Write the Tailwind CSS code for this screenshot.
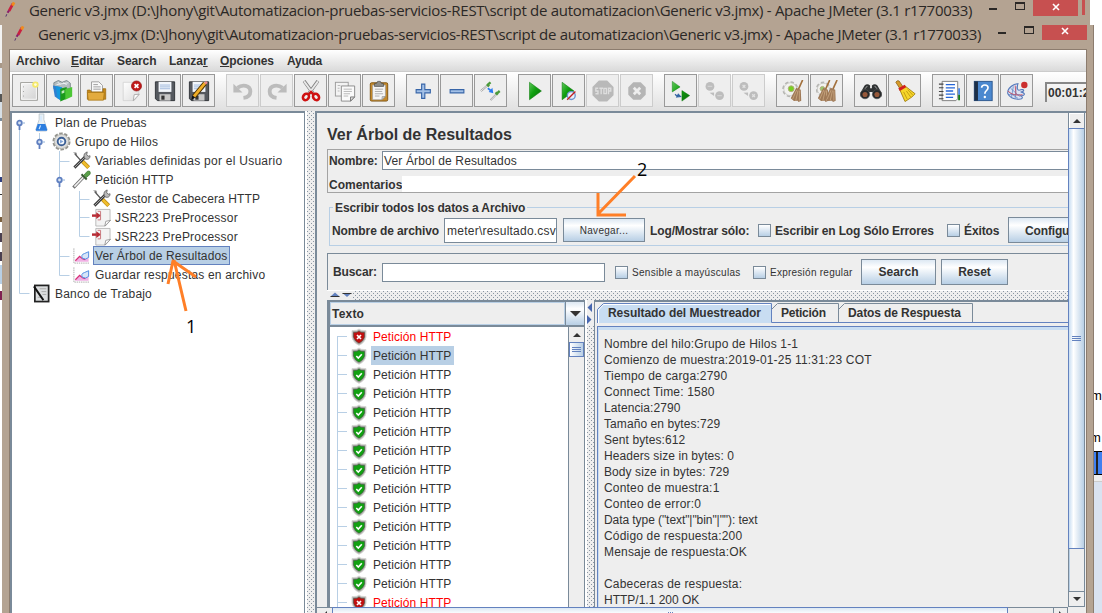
<!DOCTYPE html>
<html lang="es">
<head>
<meta charset="utf-8">
<title>Apache JMeter</title>
<script src="https://cdn.jsdelivr.net/npm/@tailwindcss/browser@4"></script>
</head>
<body class="relative h-[613px] w-[1102px] overflow-hidden bg-white font-['Liberation_Sans',Arial,sans-serif] text-[12px] leading-none text-[#333] whitespace-nowrap">
<svg class="absolute h-0 w-0">
  <defs>
    <linearGradient id="green" x1="0" y1="0" x2="1" y2="1"><stop offset="0" stop-color="#5fc85a"/><stop offset=".45" stop-color="#10a010"/><stop offset="1" stop-color="#0a6a0a"/></linearGradient>
    <linearGradient id="paper" x1="0" y1="0" x2="1" y2="1"><stop offset="0" stop-color="#fff"/><stop offset="1" stop-color="#dcdcdc"/></linearGradient>
    <linearGradient id="greypaper" x1="0" y1="0" x2="1" y2="1"><stop offset="0" stop-color="#f4f4f4"/><stop offset="1" stop-color="#d2d2d2"/></linearGradient>
  </defs>
  <symbol id="feather" viewBox="0 0 12 18"><path d="M9 3 5 10.500" stroke="#c9203f" stroke-width="3" fill="none"/><path d="M10.300 1.500 8.600 5" stroke="#f08a1d" stroke-width="3"/><path d="M5 10 3.400 12.500" stroke="#8a1c6a" stroke-width="2.200"/><path d="M2.600 14 1.600 16.500" stroke="#4b2a6a" stroke-width="1"/></symbol>
  <symbol id="new" viewBox="0 0 24 24"><rect x="3" y="3" width="18" height="19" fill="url(#greypaper)" stroke="#8b8b86"/><rect x="4" y="4" width="16" height="17" fill="none" stroke="#fff"/><path d="M6 7v14" stroke="#999" stroke-dasharray="1 4"/><circle cx="19" cy="5" r="3.500" fill="#f5e96a"/><circle cx="19" cy="5" r="1.500" fill="#fffde0"/></symbol>
  <symbol id="templates" viewBox="0 0 24 24"><path d="M2 3l5-2.500 4 2 5-2 4 3v6H2z" fill="#b3bcc0" stroke="#68777c" stroke-width=".8"/><path d="M6 2l3 3M12 3l4 2M5 5l13-2" stroke="#eef2f4"/><path d="M1 6l8 1.500v14.500l-6-4z" fill="#2f7fd0"/><path d="M4 6.500l7 1.500v14l-5-2z" fill="#1597dd"/><path d="M9 9.500l7-2v13l-7 3z" fill="#1b9a1b"/><path d="M14.500 10l7.500-2.500v10.500l-7.500 3.500z" fill="#4cc735"/><path d="M10.500 12l3-1v3l-3 1z" fill="#bfe8b8"/></symbol>
  <symbol id="open" viewBox="0 0 24 24"><path d="M6 2h8l4 4v10H6z" fill="#f8f8f8" stroke="#888" stroke-width=".8"/><path d="M8 5h5M8 7.500h8M8 10h8" stroke="#999"/><path d="M1.500 11h3l1.500 2h12.500V9.500h3V21h-20z" fill="#c88a1a" stroke="#9a6a10" stroke-width=".8"/><path d="M1.500 13.500h18.500l-1 8.500H2.500z" fill="#e3ab3e" stroke="#a57414" stroke-width=".8"/></symbol>
  <symbol id="close" viewBox="0 0 24 24"><path d="M3.500 2.500h17v14l-5 6h-12z" fill="url(#paper)" stroke="#cfcfcf" stroke-width=".8"/><path d="M14.500 22.500l1-6.500 5.500-.5z" fill="#fff" stroke="#999" stroke-width=".8"/><circle cx="18" cy="6.500" r="5.500" fill="#c01818" stroke="#8f1010" stroke-width=".7"/><path d="M15.900 4.400l4.200 4.200M20.100 4.400l-4.200 4.200" stroke="#fff" stroke-width="1.900"/></symbol>
  <symbol id="save" viewBox="0 0 24 24"><path d="M1.500 2h21v20.500H4l-2.500-2z" fill="#55595f" stroke="#2e3136"/><rect x="5" y="2" width="14" height="11" fill="#f2f6fb"/><path d="M6.500 5.500h11M6.500 7.500h11M6.500 9.500h11" stroke="#9fb8dc"/><path d="M6 15.500h12v7H6z" fill="#c8c8c8"/><path d="M8 17h3.500v4.500H8z" fill="#333"/></symbol>
  <symbol id="saveas" viewBox="0 0 24 24"><use href="#save" width="24" height="24"/><path d="M18.500 3.500 6.500 18" stroke="#4a3000" stroke-width="5"/><path d="M18.500 3.500 6.500 18" stroke="#f0ae28" stroke-width="3"/><path d="M19.600 1.200l2 1.800-2 2-2-1.800z" fill="#e88"/><path d="M3.500 22l1.200-5 3.200 2.200z" fill="#111"/></symbol>
  <symbol id="undo" viewBox="0 0 24 24"><path d="M6 8.500c5-4 14-3 14 4 0 4-3 6.500-7.500 7" fill="none" stroke="#bcbcbc" stroke-width="4.200"/><path d="M1.500 4v9.500h10z" fill="#bcbcbc"/></symbol>
  <symbol id="redo" viewBox="0 0 24 24"><g transform="matrix(-1 0 0 1 24 0)"><use href="#undo" width="24" height="24"/></g></symbol>
  <symbol id="cut" viewBox="0 0 24 24"><path d="M4.500 1 14.500 15M19.500 1 9.500 15" stroke="#808080" stroke-width="3.600"/><path d="M4.500 1.500 14.500 15M19.500 1.500 9.500 15" stroke="#e9e9e9" stroke-width="2"/><ellipse cx="6.500" cy="18.500" rx="3" ry="3.700" transform="rotate(40 6.500 18.500)" fill="none" stroke="#cf1212" stroke-width="2.800"/><ellipse cx="17.500" cy="18.500" rx="3" ry="3.700" transform="rotate(-40 17.500 18.500)" fill="none" stroke="#cf1212" stroke-width="2.800"/><path d="M9 16l3-3 3 3" stroke="#cf1212" stroke-width="2.600" fill="none"/></symbol>
  <symbol id="copy" viewBox="0 0 24 24"><rect x="1.500" y="2.500" width="14" height="15" fill="#f3f3f3" stroke="#999"/><path d="M8 6.500h14.500v12l-4 4.500H8z" fill="#fafafa" stroke="#888"/><path d="M10.500 10h9M10.500 12.500h9M10.500 15h7M10.500 17.500h5M4 6h3M4 9h2M4 12h2" stroke="#b5b5b5"/><path d="M18 23v-4.500h4.500z" fill="#ddd" stroke="#777"/></symbol>
  <symbol id="paste" viewBox="0 0 24 24"><rect x="2.500" y="3" width="19" height="20" rx="1.500" fill="#c58a2c" stroke="#7b5110"/><path d="M5 5.500h14v12l-4 4H5z" fill="#f6f6f6" stroke="#999" stroke-width=".7"/><path d="M15 21.500l.5-3.500h3.500z" fill="#ccc" stroke="#888" stroke-width=".6"/><path d="M7.500 10h9M7.500 12.500h8M7.500 15h9M7.500 17.500h5" stroke="#aaa"/><path d="M7 7V4l2.500-.5 1-2h3l1 2L17 4v3z" fill="#8c8c88" stroke="#444" stroke-width=".7"/></symbol>
  <symbol id="plus" viewBox="0 0 24 24"><path d="M10.500 4.500h3.500v6h6v3.500h-6v6h-3.500v-6h-6v-3.500h6z" fill="#a3c0e6" stroke="#3765a8" stroke-width="1.200"/></symbol>
  <symbol id="minus" viewBox="0 0 24 24"><path d="M4.500 10.500h15v3.500h-15z" fill="#a3c0e6" stroke="#3765a8" stroke-width="1.200"/></symbol>
  <symbol id="toggle" viewBox="0 0 24 24"><path d="M1 12 8 6" stroke="#999" stroke-width="2"/><path d="M1 12 8 6" stroke="#f2f2f2"/><path d="M7.500 4.500l2.500 2.500M8.500 5l3-2.500" stroke="#4b9a3a" stroke-width="2.600"/><path d="M11.500 22 18 15.500" stroke="#999" stroke-width="2"/><path d="M11.500 22 18 15.500" stroke="#f2f2f2"/><path d="M17 13.500l2.500 2.500M18.500 14.500l3-2.500" stroke="#4b9a3a" stroke-width="2.600"/><path d="M8.500 9l4 3" stroke="#2a7cf0" stroke-width="1.800"/><path d="M14.500 14.500 9.500 13l4-4.500z" fill="#2a7cf0"/></symbol>
  <symbol id="run" viewBox="0 0 24 24"><path d="M6 2.500 19 12 6 21.500z" fill="url(#green)" stroke="#0a7a0a" stroke-width=".6"/></symbol>
  <symbol id="runskip" viewBox="0 0 24 24"><path d="M4.500 2.500 17.500 12 4.500 21.500z" fill="url(#green)" stroke="#0a7a0a" stroke-width=".6"/><circle cx="14.500" cy="17" r="4.300" fill="#e9eef8" stroke="#6a93cf" stroke-width="1.500"/><path d="M19 12.500 10 21.500" stroke="#c02020" stroke-width="1.500"/></symbol>
  <symbol id="stop" viewBox="0 0 24 24"><path d="M7.500 .500h9L23.500 7.500v9L16.500 23.500h-9L.500 16.500v-9z" fill="#b9b9b9"/><g fill="none" stroke="#dedede" stroke-width="1.500"><path d="M6.800 9H4.200v3h2.300v3H3.800M8 9h4M10 9v6.500M13 9.200h2.700v5.600H13zM18 15.500V9h2.500v3H18"/></g></symbol>
  <symbol id="shutdown" viewBox="0 0 24 24"><path d="M8 2.500h8L21.500 8v8L16 21.500H8L2.500 16V8z" fill="#b5b5b5"/><path d="M8.500 8.500l7 7M15.500 8.500l-7 7" stroke="#eee" stroke-width="3"/></symbol>
  <symbol id="rstart" viewBox="0 0 24 24"><path d="M2.500 1.500 11 7.500 2.500 13zM13 11.500 21.500 17 13 23z" fill="url(#green)" stroke="#0a7a0a" stroke-width=".5"/><path d="M5.500 15.500l2 2M7.500 18.500l4-.5-2.500-2.500z" stroke="#3465a4" fill="#3465a4" stroke-width="1.300"/></symbol>
  <symbol id="rstop" viewBox="0 0 24 24"><circle cx="6.500" cy="7" r="4.800" fill="#bdbdbd"/><circle cx="17" cy="17" r="4.800" fill="#bdbdbd"/><path d="M4 7h5M14.500 17h5" stroke="#d2d2d2" stroke-width="1.500"/><path d="M6 14l5 3.500v-4z" fill="#bdbdbd"/></symbol>
  <symbol id="rshut" viewBox="0 0 24 24"><circle cx="6.500" cy="7" r="4.800" fill="#bdbdbd"/><circle cx="17" cy="17" r="4.800" fill="#bdbdbd"/><path d="M5 5.500l3 3M8 5.500l-3 3M15.500 15.500l3 3M18.500 15.500l-3 3" stroke="#e2e2e2" stroke-width="1.300"/><path d="M6 14l5 3.500v-4z" fill="#bdbdbd"/></symbol>
  <symbol id="broom" viewBox="0 0 14 24"><path d="M13 0 8.500 10" stroke="#a2703c" stroke-width="1.800"/><path d="M6 8.500l5 2 .5 12L8.500 24l-1-1.500L3.500 23 0 20z" fill="#a07a58"/><path d="M6.500 11 2 21M8 11.500 5.500 22.500M9.500 11.500v11" stroke="#cfae86" stroke-width=".8"/></symbol>
  <symbol id="clear" viewBox="0 0 24 24"><circle cx="9" cy="10" r="7.500" fill="none" stroke="#b5b5b2" stroke-dasharray="3.600 2.300" stroke-width="2.500"/><circle cx="9" cy="10" r="7" fill="#f2f2f0" stroke="#c4c4c0" stroke-width=".8"/><circle cx="10" cy="9.500" r="3.200" fill="#78cf22" stroke="#b4a97c"/><use href="#broom" x="9" width="15" height="24"/></symbol>
  <symbol id="clearall" viewBox="0 0 24 24"><circle cx="8" cy="10" r="7" fill="none" stroke="#b5b5b2" stroke-dasharray="3.600 2.300" stroke-width="2.500"/><circle cx="8" cy="10" r="6.500" fill="#f2f2f0" stroke="#c4c4c0" stroke-width=".8"/><circle cx="7" cy="9.500" r="2.500" fill="#98c96c" stroke="#b4a97c"/><use href="#broom" x="2" width="14" height="24"/><use href="#broom" x="10" width="14" height="24"/></symbol>
  <symbol id="search" viewBox="0 0 24 24"><path d="M5 6q3-3 6 0v3h2V6q3-3 6 0l4.500 8v4h-9v-5h-5v5h-9v-4z" fill="#303334"/><circle cx="5.500" cy="15.500" r="5" fill="#25282a" stroke="#555" stroke-width=".7"/><circle cx="18.500" cy="15.500" r="5" fill="#25282a" stroke="#555" stroke-width=".7"/><circle cx="5.500" cy="15.800" r="2.800" fill="#96583a"/><circle cx="18.500" cy="15.800" r="2.800" fill="#96583a"/><path d="M8 6.500 5.500 9.500M16 6.500l2.500 3" stroke="#aaa"/></symbol>
  <symbol id="sweep" viewBox="0 0 24 24"><path d="M2 2.500q1-2.500 3.500-1.500l4.500 6.500-3.500 2z" fill="#d79b2a" stroke="#865d10" stroke-width=".8"/><path d="M6 10l6-3.500L23 15c-2 3-7 6-11 8.500z" fill="#f6d62a" stroke="#9b7908" stroke-width=".9"/><path d="M5.500 10.500 12.500 6.500" stroke="#d21f1f" stroke-width="3.200"/><path d="M10.500 13l4 8M13.500 12l5 7M15 10.500l5.500 6" stroke="#b38c0c" stroke-width=".8"/></symbol>
  <symbol id="list" viewBox="0 0 24 24"><path d="M4.500 1.500h17v19l-2 2h-15z" fill="#fdfdfd" stroke="#777"/><path d="M1 4.500h5M1 8.500h5M1 12.500h5M1 16.500h5M1 20.500h5" stroke="#444" stroke-width="1.200"/><path d="M8.500 5h10M8.500 8.500h10M8.500 12h8M8.500 15.500h10M8.500 19h8" stroke="#2465d8" stroke-width="1.400"/><path d="M23 9v7" stroke="#4a86e8" stroke-width="2"/><path d="M23 16v6" stroke="#127a12" stroke-width="2"/></symbol>
  <symbol id="help" viewBox="0 0 24 24"><rect x="2.500" y="1.500" width="19.500" height="21" fill="#4b88cf" stroke="#2c568c"/><rect x="2.500" y="1.500" width="4" height="21" fill="#1d2f47"/><path d="M10.500 8.500C10.500 4.500 17.500 4.500 17.500 8.500c0 3-3.500 3-3.500 6.500" fill="none" stroke="#fff" stroke-width="1.800"/><circle cx="14" cy="18.500" r="1.300" fill="#fff"/></symbol>
  <symbol id="vise" viewBox="0 0 24 24"><path d="M9 5Q1 9 2 15q3 6 12 6c5 0 5-3 1-4 6 1 7-3 1-4 5 0 4-4-1-2Q11 12 13 4z" fill="#dbe3f3" stroke="#5478bb" stroke-width="1.200"/><path d="M3 13l10 7M5 9l10 9M8 7l-2 12M11 7l-1 13M3 16h12" stroke="#5a7fc0" stroke-width=".8"/><path d="M2 12q6 6 16 4M10 6l1 10" stroke="#d04b5c" fill="none" stroke-width=".9"/><circle cx="20" cy="5.500" r="3.500" fill="#cb2f2f"/></symbol>

  <symbol id="flask" viewBox="0 0 20 20"><path d="M7.500 1h5v6L16 17.500q0 1.500-1.500 1.500h-9Q4 19 4 17.500L7.500 7z" fill="#e8f0f5" stroke="#b5c0c8" stroke-width=".8"/><path d="M6 11.500h8l2 6q0 1.300-1.500 1.300h-9Q4 18.800 4 17.500z" fill="#2b7de0"/><path d="M9 13l-1.500 4M9.500 3v6" stroke="#cfe6ff" stroke-width="1.300"/></symbol>
  <symbol id="gear" viewBox="0 0 20 20"><circle cx="10" cy="10" r="8.500" fill="none" stroke="#94948e" stroke-width="2" stroke-dasharray="3.700 1.640"/><circle cx="10" cy="10" r="7.500" fill="#dededc" stroke="#a5a5a0" stroke-width=".8"/><circle cx="10" cy="10" r="4" fill="#f4f8fc" stroke="#3c5f94" stroke-width="2"/><path d="M8.500 8l3.500 2-3.500 2z" fill="#7fa3d6"/></symbol>
  <symbol id="tools" viewBox="0 0 20 20"><path d="M3 3 11 12" stroke="#555" stroke-width="1.500"/><path d="M11 11l6.500 6.500" stroke="#b0800f" stroke-width="4.200"/><path d="M11.300 11.300l6 6" stroke="#f0bd2c" stroke-width="2.800"/><path d="M2.500 17.500 14 6" stroke="#3d3d3d" stroke-width="3"/><path d="M2.500 17.500 14 6" stroke="#aaa" stroke-width="1"/><path d="M13 7c-1-3 0-5 3-6l-.5 3L17 5.500l2-.5c0 3-2 4.500-5 3.500z" fill="#b9b9b9" stroke="#555" stroke-width=".8"/><path d="M1 1.500h3.500l1 3z" fill="#777"/></symbol>
  <symbol id="pipette" viewBox="0 0 20 20"><path d="M1.500 18.500 12.500 7" stroke="#707070" stroke-width="3.400"/><path d="M2.500 17.500 12.500 7" stroke="#f2f2f2" stroke-width="1.600"/><path d="M10 4.500l5.500 5.500" stroke="#385a32" stroke-width="2"/><path d="M12.500 5.500l3.500-4q4-1.500 3 3l-4 3.500z" fill="#5aa04a" stroke="#3b7731" stroke-width=".8"/></symbol>
  <symbol id="pre" viewBox="0 0 20 20"><path d="M4 1.500h15v12l-5 5.500H4z" fill="#f3f3f3" stroke="#aaa" stroke-width=".8"/><path d="M13.500 19l1-5 5-1z" fill="#fff" stroke="#888" stroke-width=".8"/><path d="M0 8h5" stroke="#b82c35" stroke-width="2.600"/><path d="M4.500 4.500 9.500 8 4.500 11.500z" fill="#b82c35"/><path d="M6 3.500h3v9H6" stroke="#c8767b" fill="none"/></symbol>
  <symbol id="graph" viewBox="0 0 20 20"><path d="M2 2.500V18h16.500" stroke="#aaa" fill="none" stroke-dasharray="1.500 .8"/><path d="M3 16.500 8 12l3 2 6.500-6v8.500z" fill="#f0b0e4"/><path d="M3.500 15.500 8 11l3 2.500 3 1" stroke="#d62f78" fill="none" stroke-width="1.300"/><path d="M11 13q-2-4 2-5l4.500-2v6q-3 3-6.500 1z" stroke="#4f8be0" fill="#d7e5f8" stroke-width="1"/></symbol>
  <symbol id="bench" viewBox="0 0 20 20"><rect x="3" y="1.500" width="14.500" height="17" fill="#dcdedf" stroke="#222" stroke-width="1.800"/><path d="M8 5h7M10 8h5M11 11h4M6 14h3" stroke="#aaa"/><path d="M2 2.500 12 17" stroke="#111" stroke-width="2"/></symbol>
  <symbol id="knob" viewBox="0 0 10 14"><circle cx="4.500" cy="4" r="2.300" fill="#d5e2f2" stroke="#5f7fc0" stroke-width="1.800"/><path d="M4.500 6v5" stroke="#5f7fc0" stroke-width="1.800"/><path d="M7 4h3" stroke="#8fb0d8"/></symbol>
  <symbol id="shield" viewBox="0 0 16 18"><path d="M8 1 10 2.300 15 2.600V9q-1 5.500-7 8.300Q2 14.500 1 9V2.600l5-.3z" fill="#a8a8a5" stroke="#d8d8d5"/><path d="M8 3 10 4.300 13.500 4.500V9Q12.500 12.800 8 15.200 3.500 12.800 2.500 9V4.500L6 4.300z" fill="currentColor" stroke="#3c4a3c" stroke-width=".5"/></symbol>
</svg>

<!-- Title bar of the window behind -->
<div class="flex h-[25px] w-[1090px] items-start bg-[#b4a392] font-['Open_Sans','Noto_Sans',sans-serif] text-[15px] text-[#2b2826]">
  <svg class="ml-[4px] mt-[1px] h-[17px] w-[12px] shrink-0"><use href="#feather"/></svg>
  <span class="ml-[13px] w-[964px] shrink-0 leading-[20px] tracking-[-0.293px]">Generic v3.jmx (D:\Jhony\git\Automatizacion-pruebas-servicios-REST\script de automatizacion\Generic v3.jmx) - Apache JMeter (3.1 r1770033)</span>
  <span class="-ml-[4px] mt-[8px] h-[2px] w-[8px] shrink-0 bg-[#2b2826]"></span>
  <span class="ml-[18px] mt-[2px] h-[8px] w-[10px] shrink-0 border border-t-2 border-[#2b2826]"></span>
  <span class="ml-[8px] flex h-[16px] w-[45px] shrink-0 items-center justify-center bg-[#c75050]"><svg class="mb-[3px] h-[8px] w-[8px]" viewBox="0 0 8 8"><path d="M1 1l6 6M7 1 1 7" stroke="#fff" stroke-width="1.600"/></svg></span>
  <span class="ml-[4px] h-[15px] w-[3px] shrink-0 bg-[#c75050]"></span>
</div>

<div class="flex h-[588px]">
  <!-- Sliver of the desktop at the left -->
  <div class="flex w-[2px] shrink-0 flex-col bg-white">
    <span class="h-[38px] bg-[#f3f3f3]"></span><span class="h-[5px] bg-[#a89888]"></span><span class="h-[26px] bg-[#dfe3e8]"></span><span class="h-[8px] bg-[#555]"></span><span class="h-[16px] bg-[#d7dfe6]"></span><span class="h-[3px] bg-[#7a8a99]"></span>
    <span class="mt-[56px] h-[5px] bg-[#304080]"></span><span class="mt-[12px] h-px bg-[#333]"></span><span class="mt-[22px] h-[5px] bg-[#7a6040]"></span><span class="mt-[11px] h-[9px] bg-[#4b4050]"></span><span class="mt-[10px] h-[9px] bg-[#4b4050]"></span><span class="mt-[4px] h-[19px] bg-[#b8cfe5]"></span><span class="mt-[7px] h-[9px] bg-[#802050]"></span>
  </div>

  <!-- Main window -->
  <div class="flex w-[1092px] shrink-0 flex-col border-r border-[#8c7c6e] bg-[#b4a392]">
    <div class="flex h-[24px] shrink-0 items-start font-['Open_Sans','Noto_Sans',sans-serif] text-[15px] text-[#2b2826]">
      <svg class="ml-[11px] h-[17px] w-[12px] shrink-0"><use href="#feather"/></svg>
      <span class="-mt-px ml-[13px] w-[964px] shrink-0 leading-[20px] tracking-[-0.293px]">Generic v3.jmx (D:\Jhony\git\Automatizacion-pruebas-servicios-REST\script de automatizacion\Generic v3.jmx) - Apache JMeter (3.1 r1770033)</span>
      <span class="-ml-[4px] mt-[7px] h-[2px] w-[8px] shrink-0 bg-[#2b2826]"></span>
      <span class="ml-[18px] mt-[1px] h-[8px] w-[10px] shrink-0 border border-t-2 border-[#2b2826]"></span>
      <span class="ml-[8px] flex h-[15px] w-[45px] shrink-0 items-center justify-center bg-[#c75050]"><svg class="mb-[3px] h-[8px] w-[8px]" viewBox="0 0 8 8"><path d="M1 1l6 6M7 1 1 7" stroke="#fff" stroke-width="1.600"/></svg></span>
    </div>

    <div class="ml-[7px] flex h-[564px] w-[1078px] flex-col overflow-hidden border-x border-t border-[#8c7c6e] bg-[#eee]">
      <!-- Menu -->
      <div class="flex h-[22px] shrink-0 items-center border-b border-[#ccc] bg-linear-to-b from-white to-[#dadada] pl-[6px] font-bold">
        <span class="w-[55px] tracking-[-0.1px]">Archivo</span>
        <span class="w-[46px] tracking-[-0.1px]"><u>E</u>ditar</span>
        <span class="w-[52px] tracking-[-0.1px]">Search</span>
        <span class="w-[51px]">Lanza<u>r</u></span>
        <span class="w-[67px] tracking-[-0.1px]"><u>O</u>pciones</span>
        <span class="tracking-[-0.25px]">Ayuda</span>
      </div>
      <!-- Toolbar -->
      <div id="toolbar" class="flex h-[39px] shrink-0 items-start bg-linear-to-b from-white to-[#e0e0e0] pl-[2px] pt-[2px]"></div>

      <div class="flex min-h-0 flex-1">
        <!-- Test plan tree -->
        <div class="w-[295px] shrink-0 border-l-2 border-r border-t-2 border-[#7a8a99] bg-white">
          <div id="tree" class="relative"></div>
        </div>
        <div class="w-[10px] shrink-0 border-l-2 border-white bg-[#eee] bg-[radial-gradient(circle_at_0.5px_0.5px,#8a96a3_0.6px,transparent_0.7px),radial-gradient(circle_at_2.5px_2.5px,#8a96a3_0.6px,transparent_0.7px)] bg-size-[4px_4px]"></div>

        <!-- Right side -->
        <div class="flex min-w-0 flex-1 flex-col border-l-2 border-t-2 border-[#7a8a99]">
          <div class="flex h-[494px] shrink-0">
            <div class="flex w-[751px] shrink-0 flex-col overflow-hidden pl-[10px]">
              <div class="flex h-[36px] shrink-0 items-end text-[16px] font-bold"><span class="mb-[6px]">Ver Árbol de Resultados</span></div>
              <div class="h-[44px] shrink-0 border-y border-l border-[#a3a3a3]">
                <div class="mt-px flex h-[19px] items-center">
                  <b class="w-[54px] pl-px tracking-[-0.1px]">Nombre:</b>
                  <div class="flex h-[19px] flex-1 items-center border-y border-l border-[#7a8a99] bg-white pl-px tracking-[0.15px]">Ver Árbol de Resultados</div>
                </div>
                <div class="mt-[6px] flex h-[16px] items-center"><b class="w-[74px] pl-px pt-px">Comentarios</b><span class="h-full flex-1 bg-white"></span></div>
              </div>
              <div class="mt-[8px] flex h-[14px] shrink-0 items-center">
                <span class="ml-[2px] mt-[6px] h-[8px] w-[4px] border-l border-t border-[#b8cfe5]"></span>
                <b class="mx-[2px] tracking-[-0.12px]">Escribir todos los datos a Archivo</b>
                <span class="mt-[6px] h-[8px] flex-1 border-t border-[#b8cfe5]"></span>
              </div>
              <div class="ml-[2px] flex h-[31px] shrink-0 items-center border-b border-l border-[#b8cfe5]">
                <b class="w-[114px] pl-[2px] pt-px tracking-[-0.1px]">Nombre de archivo</b>
                <span class="flex h-[25px] w-[113px] items-center justify-end overflow-hidden border border-[#7a8a99] bg-white pt-px tracking-[0.22px]">meter\resultado.csv</span>
                <span class="ml-[6px] flex h-[24px] w-[82px] items-center justify-center border border-[#7a8a99] bg-linear-to-b from-[#dde8f3] via-white via-30% to-[#b8cfe5] pt-px text-[10px] tracking-[0.3px]">Navegar...</span>
                <b class="ml-[5px] w-[108px] pt-px tracking-[-0.12px]">Log/Mostrar sólo:</b>
                <i class="h-[13px] w-[13px] border border-[#7a8a99] bg-linear-to-b from-white to-[#b8cfe5]"></i>
                <b class="ml-[4px] w-[172px] pt-px tracking-[-0.14px]">Escribir en Log Sólo Errores</b>
                <i class="h-[13px] w-[13px] border border-[#7a8a99] bg-linear-to-b from-white to-[#b8cfe5]"></i>
                <b class="ml-[4px] w-[44px] pt-px tracking-[-0.1px]">Éxitos</b>
                <span class="flex h-[26px] flex-1 items-center overflow-hidden border-y border-l border-[#7a8a99] bg-linear-to-b from-[#dde8f3] via-white via-30% to-[#b8cfe5] pl-[16px] pt-px font-bold tracking-[-0.15px]">Configu</span>
              </div>
              <div class="mt-[7px] flex h-[37px] shrink-0 items-center border-l border-t border-[#7a8a99]">
                <b class="w-[54px] pl-[5px] tracking-[-0.1px]">Buscar:</b>
                <span class="h-[19px] w-[223px] border border-[#7a8a99] bg-white"></span>
                <i class="ml-[10px] h-[13px] w-[13px] border border-[#7a8a99] bg-linear-to-b from-white to-[#b8cfe5]"></i>
                <span class="ml-[4px] w-[121px] pt-px text-[10px] tracking-[0.3px]">Sensible a mayúsculas</span>
                <i class="h-[13px] w-[13px] border border-[#7a8a99] bg-linear-to-b from-white to-[#b8cfe5]"></i>
                <span class="ml-[4px] w-[91px] pt-px text-[10px] tracking-[0.25px]">Expresión regular</span>
                <span class="flex h-[26px] w-[75px] items-center justify-center border border-[#7a8a99] bg-linear-to-b from-[#dde8f3] via-white via-30% to-[#b8cfe5] font-bold">Search</span>
                <span class="ml-[5px] flex h-[26px] w-[67px] items-center justify-center border border-[#7a8a99] bg-linear-to-b from-[#dde8f3] via-white via-30% to-[#b8cfe5] font-bold">Reset</span>
              </div>
              <div class="h-[10px] shrink-0 border-t border-white bg-[radial-gradient(circle_at_0.5px_0.5px,#8a96a3_0.6px,transparent_0.7px),radial-gradient(circle_at_2.5px_2.5px,#8a96a3_0.6px,transparent_0.7px)] bg-size-[4px_4px]">
                <svg class="h-[9px] w-[26px] bg-[#eee]" viewBox="0 0 26 9"><path d="M3.500 5.500 8 1.500 12.500 5.500z" fill="#6382bf"/><path d="M15.500 2h9L20 6z" fill="#6382bf"/><path d="M3.500 5.500h9M15.500 2.500h9" stroke="#333"/></svg>
              </div>

              <div class="flex min-h-0 flex-1">
                <!-- Samples list -->
                <div class="flex w-[258px] shrink-0 flex-col border-l-3 border-r border-t-2 border-[#7a8a99]">
                  <div class="flex h-[25px] shrink-0 items-center border-b-2 border-[#7a8a99]">
                    <div class="flex h-[23px] flex-1 items-center border border-[#b8cfe5] pl-px font-bold tracking-[0.2px]">Texto</div>
                    <div class="flex h-[23px] w-[19px] items-center justify-center border-l border-[#7a8a99] bg-linear-to-b from-[#dde8f3] via-white via-30% to-[#b8cfe5]"><svg class="h-[6px] w-[11px]"><path d="M0 0h11L5.500 5.500z" fill="#333"/></svg></div>
                  </div>
                  <div class="flex min-h-0 flex-1">
                    <div id="samples" class="flex-1 overflow-hidden bg-white"></div>
                    <div class="flex w-[16px] flex-col border-l border-[#7a8a99]">
                      <div class="flex h-[15px] items-center justify-center"><svg class="h-[4px] w-[8px]"><path d="M0 4h8L4 0z" fill="#333"/></svg></div>
                      <div class="flex h-[15px] flex-col justify-center gap-px border border-[#6382bf] bg-linear-to-r from-white to-[#b8cfe5] px-[2px]"><i class="h-px bg-[#6382bf]"></i><i class="h-px bg-[#6382bf]"></i><i class="h-px bg-[#6382bf]"></i></div>
                    </div>
                  </div>
                </div>
                <div class="w-[9px] shrink-0 border-l-2 border-white bg-[radial-gradient(circle_at_0.5px_0.5px,#8a96a3_0.6px,transparent_0.7px),radial-gradient(circle_at_2.5px_2.5px,#8a96a3_0.6px,transparent_0.7px)] bg-size-[4px_4px]">
                  <svg class="h-[26px] w-[7px] bg-[#eee]"><path d="M5 3v9L.500 7.500zM0 15v9l4.500-4.500z" fill="#4767b0"/></svg>
                </div>
                <!-- Result tabs -->
                <div class="flex min-w-0 flex-1 flex-col border-l border-t-2 border-[#7a8a99] pl-[2px]">
                  <div class="mt-px flex h-[20px] shrink-0 font-bold">
                    <svg class="h-[20px] w-[376px]" viewBox="0 0 376 20">
                      <path d="M0 19.500V6L6 .500h168.500v19.500H0z" fill="#c8ddf2"/><path d="M.5 20V6.500l6-6h168v19" fill="none" stroke="#6382bf"/><path d="M1.500 20V7l5-5.500h167" fill="none" stroke="#fff"/>
                      <path d="M174.500 6.500l6-6h61v19M241.500 6.500l6-6h128v19" fill="none" stroke="#7a8a99"/><path d="M174.500 19.500H376" stroke="#6382bf"/>
                      <g fill="#333" font-size="12"><text x="11" y="14" textLength="153">Resultado del Muestreador</text><text x="184" y="14" textLength="45">Petición</text><text x="251" y="14" textLength="113">Datos de Respuesta</text></g>
                    </svg>
                    <span class="flex-1 border-b border-[#6382bf]"></span>
                  </div>
                  <div class="mt-[3px] min-h-0 flex-1 border-l border-t border-[#6382bf]">
                    <div class="h-full border-l border-t-3 border-[#c8ddf2] pl-[5px] pt-[6px]">
                      <pre id="result" class="font-['Liberation_Sans',Arial,sans-serif] leading-[16px] tracking-[0.18px]">Nombre del hilo:Grupo de Hilos 1-1
Comienzo de muestra:2019-01-25 11:31:23 COT
Tiempo de carga:2790
Connect Time: 1580
<span class="tracking-[0.08px]">Latencia:2790
Tamaño en bytes:729
Sent bytes:612
Headers size in bytes: 0
Body size in bytes: 729</span>
Conteo de muestra:1
Conteo de error:0
<span class="tracking-[-0.07px]">Data type ("text"|"bin"|""): text</span>
Código de respuesta:200
Mensaje de respuesta:OK

Cabeceras de respuesta:
<span class="tracking-[0px]">HTTP/1.1 200 OK</span></pre>
                    </div>
                  </div>
                </div>
              </div>
            </div>
            <!-- Vertical scroll bar -->
            <div class="flex w-[17px] flex-col border-x border-[#7a8a99]">
              <div class="flex h-[15px] items-center justify-center border-l border-t border-white"><svg class="h-[4px] w-[8px]"><path d="M0 4h8L4 0z" fill="#333"/></svg></div>
              <div class="-ml-px flex h-[421px] flex-col justify-center gap-px border border-r-0 border-[#6382bf] bg-linear-to-r from-[#c8ddf2] via-white via-30% to-[#b8cfe5] px-[3px]"><i class="h-px bg-[#6382bf]"></i><i class="h-px bg-[#6382bf]"></i><i class="h-px bg-[#6382bf]"></i></div>
              <div class="h-[42px] border-l border-[#b8cfe5]"></div>
              <div class="flex h-[16px] items-center justify-center border-y border-[#7a8a99]"><svg class="h-[4px] w-[8px]"><path d="M0 0h8L4 4z" fill="#333"/></svg></div>
            </div>
          </div>
          <!-- Horizontal scroll bar -->
          <div class="flex h-[7px] w-[751px] border-t border-[#7a8a99]">
            <div class="flex w-[15px] justify-center pt-[3px]"><svg class="h-[4px] w-[4px]"><path d="M4 0v4H0z" fill="#333"/></svg></div>
            <div class="-mt-px flex w-[676px] justify-center gap-px border-x border-t border-[#6382bf] bg-linear-to-b from-[#dde8f3] to-white pt-[4px]"><i class="w-px bg-[#6382bf]"></i><i class="w-px bg-[#6382bf]"></i><i class="w-px bg-[#6382bf]"></i></div>
            <div class="w-[45px]"></div>
            <div class="flex w-[15px] justify-center border-x border-[#7a8a99] pt-[3px]"><svg class="h-[4px] w-[4px]"><path d="M0 0v4h4z" fill="#333"/></svg></div>
          </div>
        </div>
      </div>
    </div>
  </div>

  <!-- Sliver of the page at the right -->
  <div class="flex w-[8px] flex-col overflow-hidden bg-white text-[13px] text-black">
    <span class="-ml-[3px] mt-[364px] h-[14px]">m</span>
    <span class="-ml-[4px] mt-[28px] h-[14px]">m</span>
    <span class="mt-[6px] flex h-[24px] border-y border-black bg-[#4080f0]"><i class="ml-[2px] w-[2px] bg-[#222]"></i></span>
    <span class="h-[7px] border-b border-[#ccc] bg-[#eee]"></span>
    <span class="flex-1 bg-[#d9e2f0]"></span>
  </div>
</div>

<!-- Hand-drawn step marks over the window -->
<svg class="absolute left-0 top-0 h-[613px] w-[1102px]" fill="none" stroke="#ff7f27" stroke-width="3">
  <path d="M186 311 174 260M168 284l5-23 23 16" stroke-linejoin="round"/>
  <path d="M635 176 598 214M598 193v22h28" />
  <g fill="#000" stroke="none" font-family="Open Sans, sans-serif" font-size="18"><text x="186" y="333">1</text><text x="637" y="176">2</text></g>
</svg>

<script>
const groups = ['new templates open close save saveas','-undo -redo cut copy paste','plus minus toggle','run runskip -stop -shutdown','rstart -rstop -rshut','clear clearall','search sweep','list help vise'];
document.getElementById('toolbar').innerHTML = groups.map(g => '<div class="mr-[11px] flex gap-px">' + g.split(' ').map(n => {
  const off = n[0] === '-', id = off ? n.slice(1) : n;
  return `<span class="flex h-[33px] w-[33px] items-center justify-center border bg-[#eee] ${off ? 'border-[#ccc]' : 'border-[#999]'}"><svg class="h-[22px] w-[22px]"><use href="#${id}"/></svg></span>`;
}).join('') + '</div>').join('') +
 '<div class="ml-px mt-[8px] flex h-[20px] flex-1 items-center overflow-hidden border-l-2 border-t-2 border-[#888] pl-px text-[12px] font-bold">00:01:2</div>';

const tree = [[29,'flask','Plan de Pruebas'],[49,'gear','Grupo de Hilos'],[69,'tools','Variables definidas por el Usuario'],[69,'pipette','Petición HTTP'],[89,'tools','Gestor de Cabecera HTTP'],[89,'pre','JSR223 PreProcessor'],[89,'pre','JSR223 PreProcessor'],[69,'graph','Ver Árbol de Resultados',1],[69,'graph','Guardar respuestas en archivo'],[29,'bench','Banco de Trabajo']];
const tracks = ['tracking-[0.2px]','tracking-[0.22px]','tracking-[0.26px]','tracking-[0.1px]','tracking-[0.1px]','tracking-[0.22px]','tracking-[0.22px]','tracking-[0.13px]','tracking-[0.19px]','tracking-[0.18px]'];
document.getElementById('tree').innerHTML =
 '<svg class="absolute left-0 top-0 h-[200px] w-[120px]" fill="none" stroke="#b8cfe5"><path d="M7.500 14v166.500h10M27.500 34v-14M47.500 38v124.500h10M47.500 48.500h10M47.500 143.500h10M67.500 78v45.500h10M67.500 86.500h10M67.500 104.500h10"/></svg>' +
 tree.map(([i, icon, label, sel], k) => `<div class="flex h-[19px] items-center"><svg class="h-[19px] w-[19px] shrink-0" style="margin-left:${i-9}px"><use href="#${icon}"/></svg><span class="ml-[2px] flex h-[19px] items-center border pl-px pr-[2px] ${tracks[k]} ${sel ? 'border-[#6382bf] bg-[#b8cfe5]' : 'border-transparent'}">${label}</span></div>`).join('') +
 '<svg class="absolute left-[3px] top-[6px] h-[14px] w-[10px]"><use href="#knob"/></svg><svg class="absolute left-[23px] top-[25px] h-[14px] w-[10px]"><use href="#knob"/></svg><svg class="absolute left-[43px] top-[63px] h-[14px] w-[10px]"><use href="#knob"/></svg>';

document.getElementById('samples').innerHTML = Array.from({length: 15}, (_, i) => {
  const bad = i === 0 || i === 14;
  return `<div class="flex h-[19px] items-center ${bad ? 'text-[#ff0000]' : ''}"><span class="ml-[7px] w-px bg-[#b8cfe5] ${i === 0 ? 'mt-[9px] h-[10px]' : 'h-[19px]'}"></span><span class="h-px w-[9px] bg-[#b8cfe5]"></span>
  <svg class="ml-[4px] h-[18px] w-[16px] shrink-0 ${bad ? 'text-[#c01010]' : 'text-[#12a012]'}" viewBox="0 0 16 18"><use href="#shield"/>${bad ? '<path d="M6 7l4 4M10 7l-4 4" stroke="#fff" stroke-width="1.700"/>' : '<path d="M5.300 9l2 2L10.800 7.300" stroke="#fff" stroke-width="1.600" fill="none"/>'}</svg>
  <span class="ml-[4px] flex h-[19px] items-center pl-[2px] pr-[3px] tracking-[0.08px] ${i === 1 ? 'bg-[#b8cfe5]' : ''}">Petición HTTP</span></div>`;
}).join('');
</script>
</body>
</html>
